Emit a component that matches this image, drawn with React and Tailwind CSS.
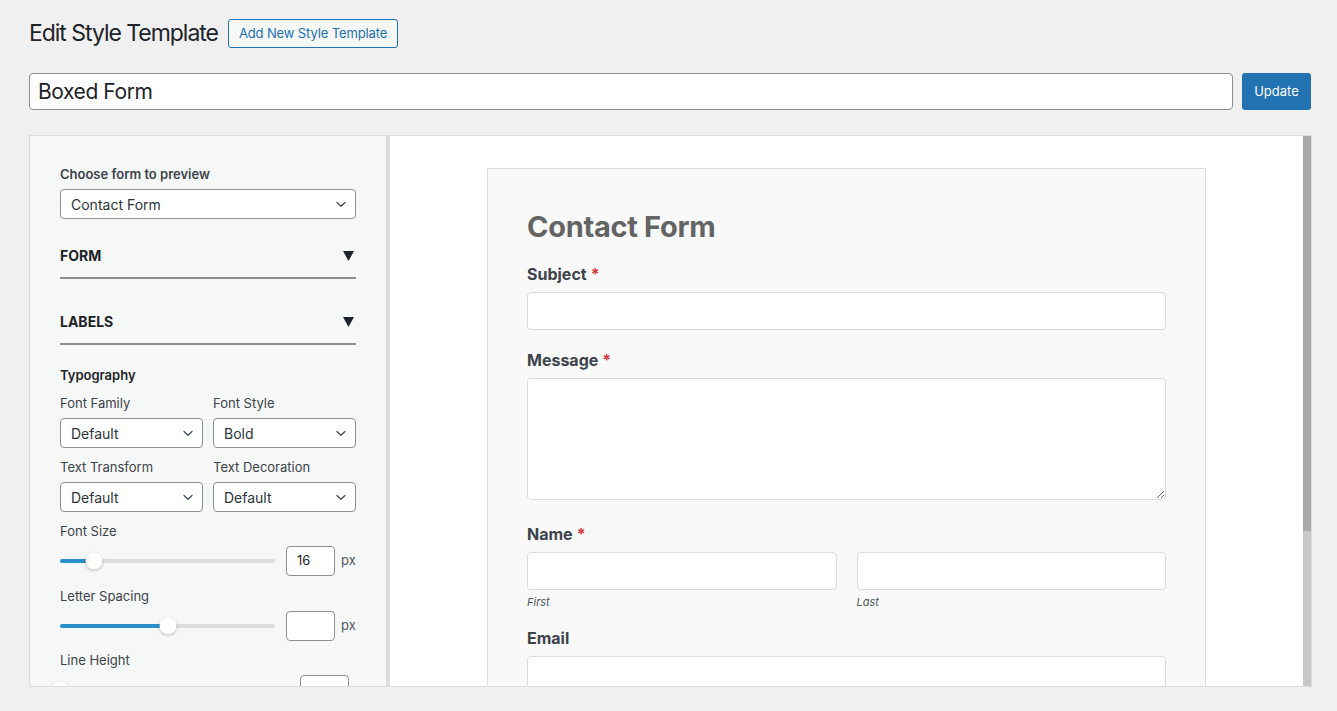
import React from "react";

const font = { fontFamily: "Inter, 'Noto Sans', sans-serif" };

function Chevron() {
  return (
    <svg width="12" height="12" viewBox="0 0 12 12" className="shrink-0">
      <path d="M2 4.5 L6 8.2 L10 4.5" fill="none" stroke="#3c434a" strokeWidth="1.2" strokeLinecap="round" strokeLinejoin="round" />
    </svg>
  );
}

function Select({ value }) {
  return (
    <div className="h-[30px] bg-white border border-[#8c8f94] rounded-[4px] flex items-center justify-between pl-[10px] pr-[8px] text-[14px] text-[#2c3338]">
      <span>{value}</span>
      <Chevron />
    </div>
  );
}

function Triangle() {
  return (
    <svg width="11" height="10" viewBox="0 0 11 10">
      <polygon points="0,0 11,0 5.5,10" fill="#1d2327" />
    </svg>
  );
}

function Slider({ pct, value, lineHeight = false }) {
  return (
    <div className="flex items-center h-[30px]">
      <div className="relative w-[215px] h-[4px] bg-[#dcdcde] rounded-full">
        <div className="absolute left-0 top-0 h-[4px] bg-[#2c8ec8] rounded-full" style={{ width: `${pct}%` }} />
        <div
          className="absolute top-1/2 w-[17px] h-[17px] -translate-y-1/2 -translate-x-1/2 bg-white rounded-full shadow-[0_1px_3px_rgba(0,0,0,0.25)]"
          style={{ left: `${pct}%` }}
        />
      </div>
      {lineHeight ? (
        <div className="ml-[25px] w-[49px] h-[30px] bg-white border border-[#8c8f94] rounded-[4px]" />
      ) : (
        <>
          <div className="ml-[11px] w-[49px] h-[30px] bg-white border border-[#8c8f94] rounded-[4px] flex items-center pl-[10px] text-[13px] text-[#1d2327]">
            {value}
          </div>
          <span className="ml-[6px] text-[13px] text-[#50575e]">px</span>
        </>
      )}
    </div>
  );
}

function Label({ text, required }) {
  return (
    <div className="text-[16px] leading-[22px] font-bold text-[#3c434a]">
      {text}
      {required && <span className="text-[#d63638] ml-[4px]">*</span>}
    </div>
  );
}

export default function App() {
  return (
    <div className="min-h-[711px] h-[711px] bg-[#f0f0f1] overflow-hidden pl-[29px] pr-[25px] pt-[19px]" style={font}>
      <div className="flex items-center h-[29px]">
        <h1 className="text-[23px] leading-[29px] tracking-[-0.045em] text-[#1d2327] font-normal">Edit Style Template</h1>
        <div className="ml-[10px] h-[29px] px-[10px] flex items-center border border-[#2271b1] rounded-[3px] bg-[#f6f7f7] text-[13px] tracking-[-0.01em] text-[#2271b1]">
          Add New Style Template
        </div>
      </div>

      <div className="mt-[25px] flex items-center">
        <div className="w-[1204px] h-[37px] bg-white border border-[#8c8f94] rounded-[4px] flex items-center pl-[8px] text-[21px] tracking-[-0.02em] text-[#1d2327]">
          Boxed Form
        </div>
        <div className="ml-[9px] w-[69px] h-[37px] bg-[#2271b1] rounded-[3px] flex items-center justify-center text-[13px] text-white">
          Update
        </div>
      </div>

      <div className="mt-[25px] w-[1283px] h-[552px] border border-[#dcdcde] bg-white flex overflow-hidden">
        <div className="w-[360px] shrink-0 bg-[#f6f7f7] border-r-[4px] border-[#dcdcde] pl-[30px] pr-[30px] pt-[29px]">
          <div className="text-[13px] leading-[18px] font-semibold text-[#3c434a]">Choose form to preview</div>
          <div className="mt-[6px]">
            <Select value="Contact Form" />
          </div>

          <div className="mt-[27px] pb-[11px] border-b-2 border-[#8c8f94] flex items-center justify-between pr-[2px]">
            <span className="text-[14px] leading-[20px] font-bold text-[#1d2327]">FORM</span>
            <Triangle />
          </div>
          <div className="mt-[33px] pb-[11px] border-b-2 border-[#8c8f94] flex items-center justify-between pr-[2px]">
            <span className="text-[14px] leading-[20px] font-bold text-[#1d2327]">LABELS</span>
            <Triangle />
          </div>

          <div className="mt-[21px] text-[13px] leading-[18px] font-semibold text-[#1d2327]">Typography</div>

          <div className="grid grid-cols-2 gap-x-[10px]">
            <div>
              <div className="mt-[10px] text-[13px] leading-[18px] text-[#3c434a]">Font Family</div>
              <div className="mt-[6px]"><Select value="Default" /></div>
            </div>
            <div>
              <div className="mt-[10px] text-[13px] leading-[18px] text-[#3c434a]">Font Style</div>
              <div className="mt-[6px]"><Select value="Bold" /></div>
            </div>
            <div>
              <div className="mt-[10px] text-[13px] leading-[18px] text-[#3c434a]">Text Transform</div>
              <div className="mt-[6px]"><Select value="Default" /></div>
            </div>
            <div>
              <div className="mt-[10px] text-[13px] leading-[18px] text-[#3c434a]">Text Decoration</div>
              <div className="mt-[6px]"><Select value="Default" /></div>
            </div>
          </div>

          <div className="mt-[10px] text-[13px] leading-[18px] text-[#3c434a]">Font Size</div>
          <div className="mt-[6px]"><Slider pct={16} value="16" /></div>
          <div className="mt-[11px] text-[13px] leading-[18px] text-[#3c434a]">Letter Spacing</div>
          <div className="mt-[6px]"><Slider pct={50} value="" /></div>
          <div className="mt-[10px] text-[13px] leading-[18px] text-[#3c434a]">Line Height</div>
          <div className="mt-[6px]"><Slider pct={0} value="" lineHeight /></div>
        </div>

        <div className="flex-1 flex justify-center pt-[32px] bg-white">
          <div className="w-[719px] h-[600px] shrink-0 bg-[#f9f9f9] border border-[#dcdcde] px-[39px] pt-[40px]">
            <div className="text-[29px] leading-[36px] tracking-[-0.01em] font-bold text-[#646464]">Contact Form</div>

            <div className="mt-[18px]"><Label text="Subject" required /></div>
            <div className="mt-[7px] h-[38px] bg-white border border-[#dcdcde] rounded-[4px]" />

            <div className="mt-[19px]"><Label text="Message" required /></div>
            <textarea
              readOnly
              className="mt-[7px] block w-full h-[122px] bg-white border border-[#dcdcde] rounded-[4px] resize-y outline-none"
            />

            <div className="mt-[23px]"><Label text="Name" required /></div>
            <div className="mt-[7px] grid grid-cols-2 gap-x-[20px]">
              <div>
                <div className="h-[38px] bg-white border border-[#dcdcde] rounded-[4px]" />
                <div className="mt-[5px] text-[11px] leading-[14px] italic text-[#50575e]">First</div>
              </div>
              <div>
                <div className="h-[38px] bg-white border border-[#dcdcde] rounded-[4px]" />
                <div className="mt-[5px] text-[11px] leading-[14px] italic text-[#50575e]">Last</div>
              </div>
            </div>

            <div className="mt-[18px]"><Label text="Email" /></div>
            <div className="mt-[7px] h-[38px] bg-white border border-[#dcdcde] rounded-[4px]" />
          </div>
        </div>

        <div className="w-[8px] shrink-0 flex flex-col bg-[#c8c8c8]">
          <div className="h-[395px] bg-[#a8a8a8]" />
        </div>
      </div>
    </div>
  );
}
